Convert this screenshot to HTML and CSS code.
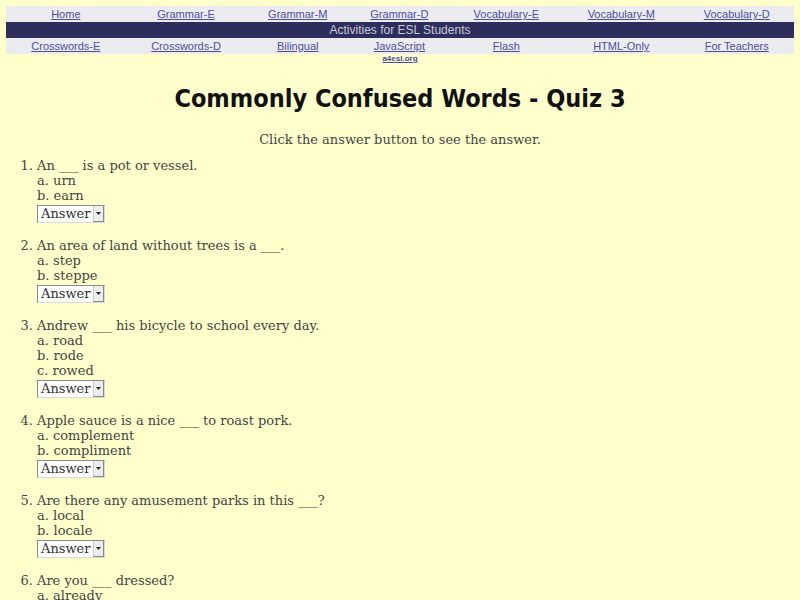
FILE: index.html
```html
<!DOCTYPE html>
<html>
<head>
<meta charset="utf-8">
<title>Commonly Confused Words - Quiz 3</title>
<link rel="stylesheet" href="styles.css">
</head>
<body>
<table class="nav">
  <tr class="navrow">
    <td><a href="#">Home</a></td>
    <td><a href="#">Grammar-E</a></td>
    <td><a href="#">Grammar-M</a></td>
    <td><a href="#">Grammar-D</a></td>
    <td><a href="#">Vocabulary-E</a></td>
    <td><a href="#">Vocabulary-M</a></td>
    <td><a href="#">Vocabulary-D</a></td>
  </tr>
  <tr class="bar">
    <td colspan="7">Activities for ESL Students</td>
  </tr>
  <tr class="navrow">
    <td><a href="#">Crosswords-E</a></td>
    <td><a href="#">Crosswords-D</a></td>
    <td><a href="#">Bilingual</a></td>
    <td><a href="#">JavaScript</a></td>
    <td><a href="#">Flash</a></td>
    <td><a href="#">HTML-Only</a></td>
    <td><a href="#">For Teachers</a></td>
  </tr>
  <tr class="site">
    <td colspan="7"><a href="#">a4esl.org</a></td>
  </tr>
</table>

<h1 class="title">Commonly Confused Words - Quiz 3</h1>
<p class="intro">Click the answer button to see the answer.</p>

<ol class="quiz">
  <li>An <span class="blank">___</span> is a pot or vessel.
    <div class="opt">a. urn</div>
    <div class="opt">b. earn</div>
    <div class="answer"><span class="answer-label">Answer</span><span class="answer-btn"><svg width="5" height="3" viewBox="0 0 5 3"><path d="M0 0H5L2.5 3Z" fill="#222"/></svg></span></div>
  </li>
  <li>An area of land without trees is a <span class="blank">___</span>.
    <div class="opt">a. step</div>
    <div class="opt">b. steppe</div>
    <div class="answer"><span class="answer-label">Answer</span><span class="answer-btn"><svg width="5" height="3" viewBox="0 0 5 3"><path d="M0 0H5L2.5 3Z" fill="#222"/></svg></span></div>
  </li>
  <li>Andrew <span class="blank">___</span> his bicycle to school every day.
    <div class="opt">a. road</div>
    <div class="opt">b. rode</div>
    <div class="opt">c. rowed</div>
    <div class="answer"><span class="answer-label">Answer</span><span class="answer-btn"><svg width="5" height="3" viewBox="0 0 5 3"><path d="M0 0H5L2.5 3Z" fill="#222"/></svg></span></div>
  </li>
  <li>Apple sauce is a nice <span class="blank">___</span> to roast pork.
    <div class="opt">a. complement</div>
    <div class="opt">b. compliment</div>
    <div class="answer"><span class="answer-label">Answer</span><span class="answer-btn"><svg width="5" height="3" viewBox="0 0 5 3"><path d="M0 0H5L2.5 3Z" fill="#222"/></svg></span></div>
  </li>
  <li>Are there any amusement parks in this <span class="blank">___</span>?
    <div class="opt">a. local</div>
    <div class="opt">b. locale</div>
    <div class="answer"><span class="answer-label">Answer</span><span class="answer-btn"><svg width="5" height="3" viewBox="0 0 5 3"><path d="M0 0H5L2.5 3Z" fill="#222"/></svg></span></div>
  </li>
  <li>Are you <span class="blank">___</span> dressed?
    <div class="opt">a. already</div>
    <div class="opt">b. all ready</div>
    <div class="answer"><span class="answer-label">Answer</span><span class="answer-btn"><svg width="5" height="3" viewBox="0 0 5 3"><path d="M0 0H5L2.5 3Z" fill="#222"/></svg></span></div>
  </li>
</ol>
</body>
</html>
```
FILE: styles.css
```css
html, body {
  background: #ffffcc;
}
body {
  margin: 6px;
  color: #444444;
  font-family: "DejaVu Serif", "Liberation Serif", serif;
  font-size: 13px;
}
.nav {
  width: 100%;
  border-collapse: collapse;
  font-family: "Liberation Sans", Arial, sans-serif;
  font-size: 11px;
}
.nav td {
  padding: 0;
  text-align: center;
}
.navrow td {
  background: #ececf0;
  height: 16px;
}
.nav a {
  color: #4c4ca0;
}
.bar td {
  background: #2e2e5c;
  color: #c8c8d8;
  font-size: 12px;
  height: 16px;
}
.site td {
  font-size: 8px;
  height: 10px;
  line-height: 10px;
  font-weight: bold;
}
.title {
  margin: 20px 0 0;
  text-align: center;
  font-family: "DejaVu Sans Condensed", "DejaVu Sans", sans-serif;
  font-size: 25px;
  font-weight: bold;
  color: #111111;
  line-height: 30px;
}
.intro {
  margin: 18px 0 0;
  text-align: center;
  line-height: 15px;
}
.quiz {
  margin: 11px 0 0;
  padding-left: 31px;
  line-height: 15px;
}
.quiz li {
  margin-bottom: 15px;
}
.answer {
  display: inline-flex;
  align-items: stretch;
  margin-top: 2px;
  height: 16px;
  border: 1px solid #8a8a8a;
  border-right-color: #d8d8d8;
  border-bottom-color: #d8d8d8;
  background: #ffffff;
  font-size: 13px;
  line-height: 16px;
  color: #333333;
}
.answer-label {
  padding: 0 3px 0 3px;
}
.answer-btn {
  width: 11px;
  display: flex;
  align-items: center;
  justify-content: center;
  background: #ececec;
  border-left: 1px solid #cccccc;
  border-right: 1px solid #888888;
  border-bottom: 1px solid #888888;
  box-sizing: border-box;
}
```
